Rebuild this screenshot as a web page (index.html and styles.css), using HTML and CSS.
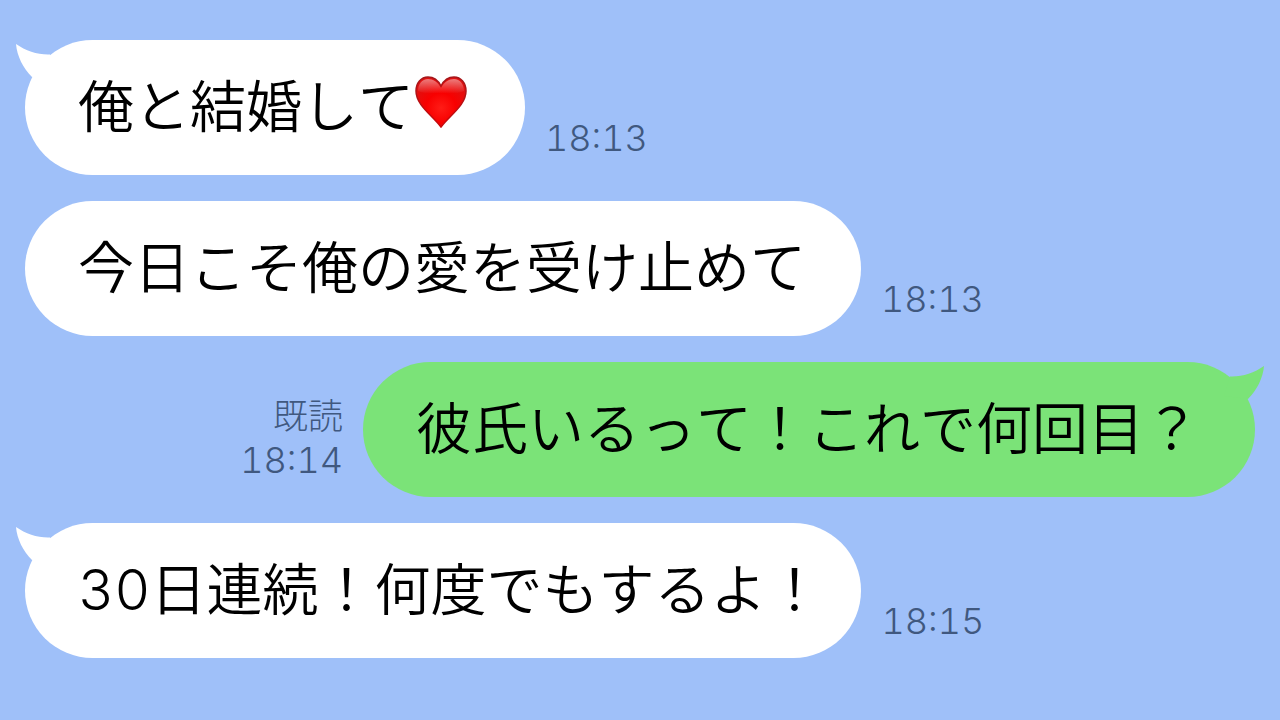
FILE: index.html
```html
<!DOCTYPE html>
<html lang="ja">
<head>
<meta charset="utf-8">
<title>トーク</title>
<link rel="stylesheet" href="styles.css">
</head>
<body>
<main class="chat">
  <article class="message">
    <div class="bubble">
      <svg class="tail" viewBox="0 0 40 36" aria-hidden="true"><path d="M0 0C10 7 22 11 34 10.500L40 30L16 33C7 24 1 12 0 0Z"/></svg>
      <p class="text">俺と結婚して<svg class="heart" viewBox="0 0 56 56" role="img" aria-label="ハート">
        <defs>
          <radialGradient id="fill" cx="0.5" cy="0.62" r="0.6"><stop offset="0" stop-color="#ff1c16"/><stop offset="0.5" stop-color="#f80000"/><stop offset="1" stop-color="#e01010"/></radialGradient>
          <linearGradient id="shine" x1="0" y1="0" x2="0" y2="1"><stop offset="0" stop-color="#fff" stop-opacity="0.45"/><stop offset="1" stop-color="#fff" stop-opacity="0"/></linearGradient>
          <linearGradient id="rim" x1="0" y1="0" x2="0" y2="1"><stop offset="0" stop-color="#a5171b"/><stop offset="1" stop-color="#c8080a"/></linearGradient>
        </defs>
        <path fill="url(#fill)" stroke="url(#rim)" stroke-width="1.500" d="M27 12C24 6 19 3 14 3C7 3 2 9 2 17C2 31 18 41 27 53C36 41 52 31 52 17C52 9 47 3 40 3C35 3 30 6 27 12Z"/>
        <path fill="url(#shine)" d="M27 14C24 8 19 5 14 5C8 5 4 10 4 17C11 20 19 20 27 19C35 20 43 20 50 17C50 10 46 5 40 5C35 5 30 8 27 14Z"/>
      </svg></p>
    </div>
    <div class="meta"><time>18:13</time></div>
  </article>
  <article class="message">
    <div class="bubble"><p class="text">今日こそ俺の愛を受け止めて</p></div>
    <div class="meta"><time>18:13</time></div>
  </article>
  <article class="message sent">
    <div class="bubble">
      <svg class="tail" viewBox="0 0 40 36" aria-hidden="true"><path d="M0 0C10 7 22 11 34 10.500L40 30L16 33C7 24 1 12 0 0Z"/></svg>
      <p class="text">彼氏いるって！これで何回目？</p>
    </div>
    <div class="meta"><span class="read">既読</span><time>18:14</time></div>
  </article>
  <article class="message">
    <div class="bubble snug">
      <svg class="tail" viewBox="0 0 40 36" aria-hidden="true"><path d="M0 0C10 7 22 11 34 10.500L40 30L16 33C7 24 1 12 0 0Z"/></svg>
      <p class="text"><span class="number">30</span>日連続！何度でもするよ！</p>
    </div>
    <div class="meta"><time>18:15</time></div>
  </article>
</main>
</body>
</html>
```
FILE: styles.css
```css
* { box-sizing: border-box; }

body {
  margin: 0;
  min-height: 100vh;
  background: #9fc0f9;
  color: #000;
  font-family: "Noto Sans CJK JP", sans-serif;
}

.chat {
  display: flex;
  flex-direction: column;
  gap: 26px;
  padding: 40px 25px;
}

.message {
  display: flex;
  align-items: flex-end;
  gap: 20px;
}

.sent { flex-direction: row-reverse; }

.bubble {
  --bubble-color: #fff;
  position: relative;
  padding: 23px 55px 32px 53px;
  border-radius: 68px;
  background: var(--bubble-color);
}

.sent .bubble { --bubble-color: #7be378; }

.snug { padding-right: 39px; }

.tail {
  position: absolute;
  top: 4px;
  left: -9px;
  width: 40px;
  height: 36px;
  fill: var(--bubble-color);
}

.sent .tail {
  left: auto;
  right: -9px;
  transform: scaleX(-1);
}

.text {
  margin: 0;
  font-size: 56px;
  font-weight: 350;
  font-kerning: none;
  line-height: 80px;
}

.number {
  font-family: Inter, sans-serif;
  font-weight: 300;
  font-variant-numeric: tabular-nums;
  line-height: 1;
}

.heart {
  width: 56px;
  height: 56px;
  vertical-align: -3px;
}

.meta {
  display: flex;
  flex-direction: column;
  align-items: flex-end;
  padding-bottom: 14px;
  color: #40587f;
  font-family: Inter, "Noto Sans CJK JP", sans-serif;
  font-size: 36px;
  font-weight: 300;
  font-variant-numeric: tabular-nums;
  line-height: 46px;
}

.read {
  font-family: "Noto Sans CJK JP", sans-serif;
  font-size: 35px;
}
```
